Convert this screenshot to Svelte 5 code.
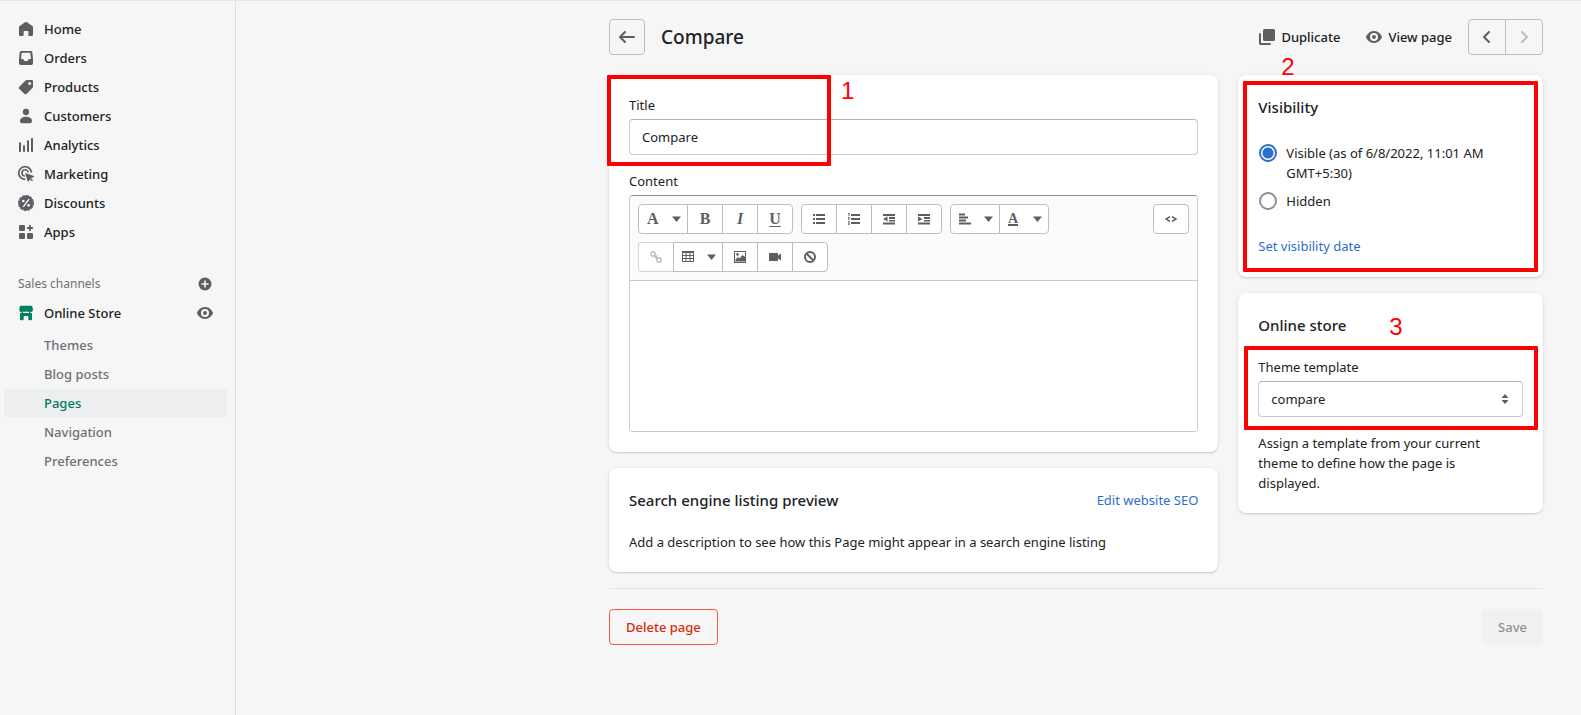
<script>
  const nav = ['Home', 'Orders', 'Products', 'Customers', 'Analytics', 'Marketing', 'Discounts', 'Apps'];
  const channelPages = ['Themes', 'Blog posts', 'Pages', 'Navigation', 'Preferences'];
  let title = $state('Compare');
  let visibility = $state('visible');
  let template = $state('compare');
  let content = $state('');
</script>

{#snippet eye()}
  <svg class="i20" viewBox="0 0 20 20" aria-hidden="true"><path fill-rule="evenodd" d="M17.928 9.628C17.837 9.399 15.611 4 10 4S2.162 9.399 2.07 9.628a1.017 1.017 0 0 0 0 .744C2.163 10.601 4.389 16 10 16s7.837-5.399 7.928-5.628a1.017 1.017 0 0 0 0-.744zM10 14a4 4 0 1 1 0-8 4 4 0 0 1 0 8zm0-6a2 2 0 1 0 0 4 2 2 0 0 0 0-4z" /></svg>
{/snippet}

{#snippet caret()}
  <svg class="caret" viewBox="0 0 9 6" aria-hidden="true"><path d="M0 .5h9L4.500 6z" /></svg>
{/snippet}

{#snippet navIcon(name)}
  <svg class="i16" viewBox="0 0 48 48" aria-hidden="true">
    {#if name === 'Home'}
      <path d="M21 4a5 5 0 0 1 6 0l16 11a4 4 0 0 1 2 3v23a4 4 0 0 1-4 4h-7a3 3 0 0 1-3-3V32a2 2 0 0 0-2-2H19a2 2 0 0 0-2 2v10a3 3 0 0 1-3 3H7a4 4 0 0 1-4-4V18a4 4 0 0 1 2-3z" />
    {:else if name === 'Orders'}
      <path fill-rule="evenodd" d="M10 3h28a5 5 0 0 1 5 4l2 20v13a5 5 0 0 1-5 5H8a5 5 0 0 1-5-5V27L5 7a5 5 0 0 1 5-4zM13 8a2 2 0 0 0-2 2L9 27h6c2 0 3 6 5 6h8c2 0 3-6 5-6h6l-2-17a2 2 0 0 0-2-2z" />
    {:else if name === 'Products'}
      <path fill-rule="evenodd" d="M27 3h14a4 4 0 0 1 4 4v15a6 6 0 0 1-2 5L26 44a5 5 0 0 1-7 0L4 30a5 5 0 0 1 0-7L22 5a7 7 0 0 1 5-2zm8 6a4.500 4.500 0 1 0 .01 0z" />
    {:else if name === 'Customers'}
      <circle cx="24" cy="12" r="9.500" /><path d="M24 26c11 0 18 5 18 12 0 5-3 8-7 8H13c-4 0-7-3-7-8 0-7 7-12 18-12z" />
    {:else if name === 'Analytics'}
      <rect x="3" y="16" width="6" height="29" rx="2" /><rect x="15" y="25" width="6" height="20" rx="2" /><rect x="27" y="10" width="6" height="35" rx="2" /><rect x="39" y="3" width="6" height="42" rx="2" />
    {:else if name === 'Marketing'}
      <g fill="none" stroke="currentColor" stroke-width="5" stroke-linecap="round"><path d="M40 18A19 19 0 1 0 20 40" /><path d="M30 17a9.500 9.500 0 1 0-11 13" /></g>
      <path d="M24 22l22 7c3 1 3 4 0 5l-6 2-1 1 6 6-3 3-6-6-3 6c-1 2-4 2-4-1l-7-20c-1-2 0-4 2-3z" />
    {:else if name === 'Discounts'}
      <circle cx="24" cy="24" r="21.500" /><circle cx="24" cy="24" r="22" fill="none" stroke="currentColor" stroke-width="4" stroke-dasharray="6 5.500" stroke-linecap="round" />
      <path d="M32 14L17 34" stroke="#f6f6f7" stroke-width="4.500" stroke-linecap="round" /><circle cx="16" cy="18" r="4" fill="#f6f6f7" /><circle cx="32" cy="31" r="4" fill="#f6f6f7" />
    {:else if name === 'Apps'}
      <rect x="3" y="3" width="18" height="18" rx="4" /><rect x="3" y="27" width="18" height="18" rx="4" /><rect x="27" y="27" width="18" height="18" rx="4" />
      <path d="M36 5v14M29 12h14" stroke="currentColor" stroke-width="5.500" stroke-linecap="round" />
    {:else}
      <path d="M8 2h32l2 1 3 10c0 5-2 8-6 8-3 0-4-1-5-3-1 2-3 3-5 3s-4-1-5-3c-1 2-3 3-5 3s-4-1-5-3c-1 2-2 3-5 3-4 0-5-3-5-8L6 3z" />
      <path d="M6 24h36v18a4 4 0 0 1-4 4h-4a3 3 0 0 1-3-3v-8a2 2 0 0 0-2-2H19a2 2 0 0 0-2 2v8a3 3 0 0 1-3 3h-4a4 4 0 0 1-4-4z" />
      <path d="M11 19h4v6h-4zM33 19h4v6h-4z" />
    {/if}
  </svg>
{/snippet}

<div class="app">
  <nav class="sidebar" aria-label="Main">
    <ul>
      {#each nav as item}
        <li><a class="item" href="#{item}">{@render navIcon(item)}<span>{item}</span></a></li>
      {/each}
    </ul>
    <div class="section">
      <span>Sales channels</span>
      <button class="plain" aria-label="Add sales channel">
        <svg class="i20" viewBox="0 0 20 20"><circle cx="10" cy="10" r="6.500" /><path d="M10 6.500v7M6.500 10h7" stroke="#f6f6f7" stroke-width="1.600" /></svg>
      </button>
    </div>
    <div class="channel">
      <a class="item store" href="#store">{@render navIcon('Store')}<span>Online Store</span></a>
      <button class="plain" aria-label="View your online store">{@render eye()}</button>
    </div>
    <ul class="sub">
      {#each channelPages as page}
        <li><a class:active={page === 'Pages'} href="#{page}">{page}</a></li>
      {/each}
    </ul>
  </nav>

  <main>
    <div class="page">
      <header>
        <button class="back" aria-label="Back">
          <svg class="i20" viewBox="0 0 20 20"><path d="M17 9H5.414l3.293-3.293a.999.999 0 1 0-1.414-1.414l-5 5a.999.999 0 0 0 0 1.414l5 5a.997.997 0 0 0 1.414 0 .999.999 0 0 0 0-1.414L5.414 11H17a1 1 0 1 0 0-2z" /></svg>
        </button>
        <h1>Compare</h1>
        <div class="actions">
          <button class="action">
            <svg class="i20" viewBox="0 0 20 20" aria-hidden="true"><rect x="6" y="2" width="12" height="12" rx="1.500" /><path d="M2 7a1 1 0 0 1 2 0v9h9a1 1 0 0 1 0 2H3.500A1.500 1.500 0 0 1 2 16.500z" /></svg>
            Duplicate
          </button>
          <button class="action">{@render eye()}View page</button>
        </div>
        <div class="pager">
          <button aria-label="Previous"><svg class="i20" viewBox="0 0 20 20"><path d="M12 16a.997.997 0 0 1-.707-.293l-5-5a.999.999 0 0 1 0-1.414l5-5a.999.999 0 1 1 1.414 1.414L8.414 10l4.293 4.293A.999.999 0 0 1 12 16z" /></svg></button>
          <button aria-label="Next" disabled><svg class="i20" viewBox="0 0 20 20"><path d="M8 16a.999.999 0 0 1-.707-1.707L11.586 10 7.293 5.707a.999.999 0 1 1 1.414-1.414l5 5a.999.999 0 0 1 0 1.414l-5 5A.997.997 0 0 1 8 16z" /></svg></button>
        </div>
      </header>

      <div class="columns">
        <div class="column">
          <section class="card">
            <label for="title">Title</label>
            <input id="title" class="text" type="text" bind:value={title} />
            <label class="next" for="content">Content</label>
            <div class="editor">
              <div class="toolbar">
                <div class="tools">
                  <div class="group">
                    <button class="wide" aria-label="Formatting"><span class="glyph">A</span>{@render caret()}</button>
                    <button aria-label="Bold"><span class="glyph">B</span></button>
                    <button aria-label="Italic"><span class="glyph italic">I</span></button>
                    <button aria-label="Underline"><span class="glyph underline">U</span></button>
                  </div>
                  <div class="group">
                    <button aria-label="Bulleted list"><svg class="i12" viewBox="0 0 12 12"><path d="M0 1h2v2H0zM3 1h9v2H3zM0 5h2v2H0zM3 5h9v2H3zM0 9h2v2H0zM3 9h9v2H3z" /></svg></button>
                    <button aria-label="Numbered list"><svg class="i12" viewBox="0 0 12 12"><path d="M3 1h9v2H3zM3 5h9v2H3zM3 9h9v2H3zM0 0h1.500v3H.6V1H0zM0 4h1.600v1.600L.8 6.400h.8V7H0V6.200L.8 5H0zM0 8h1.600v4H0v-.8h.8v-.8H0v-.8h.8v-.8H0z" /></svg></button>
                    <button aria-label="Outdent"><svg class="i12" viewBox="0 0 12 12"><path d="M0 1h12v2H0zM6 4h6v2H6zM6 7h6v1.500H6zM0 9.500h12v2H0zM4.500 3.500v5L0 6z" /></svg></button>
                    <button aria-label="Indent"><svg class="i12" viewBox="0 0 12 12"><path d="M0 1h12v2H0zM6 4h6v2H6zM6 7h6v1.500H6zM0 9.500h12v2H0zM0 3.500v5L4.500 6z" /></svg></button>
                  </div>
                  <div class="group">
                    <button class="wide" aria-label="Alignment"><svg class="i12" viewBox="0 0 12 12"><path d="M0 .5h6v2H0zM0 3.500h9v2H0zM0 6.500h7v2H0zM0 9.500h12v2H0z" /></svg>{@render caret()}</button>
                    <button class="wide" aria-label="Color"><span class="glyph color">A</span>{@render caret()}</button>
                  </div>
                  <div class="group">
                    <button aria-label="Link" disabled><svg class="i12" viewBox="0 0 12 12"><g fill="none" stroke="currentColor" stroke-width="1.400"><circle cx="3" cy="3" r="2.200" /><circle cx="9" cy="9" r="2.200" /><path d="M4 4l4 4M7 4.500L5 7" /></g></svg></button>
                    <button class="wide" aria-label="Table"><svg class="i12" viewBox="0 0 12 12"><path fill-rule="evenodd" d="M0 0h12v11H0zM1 2v2h2.500V2zM4.500 2v2h3V2zM8.500 2v2H11V2zM1 5v2h2.500V5zM4.500 5v2h3V5zM8.500 5v2H11V5zM1 8v2h2.500V8zM4.500 8v2h3V8zM8.500 8v2H11V8z" /></svg>{@render caret()}</button>
                    <button aria-label="Image"><svg class="i12" viewBox="0 0 12 12"><path fill-rule="evenodd" d="M0 0h12v12H0zM1 1v10h10V1zM1.500 10.500v-2L4 6l1.500 1.500L8.500 4l2.500 2v4.500zM3.500 2a1.400 1.400 0 1 1-.01 0z" /></svg></button>
                    <button aria-label="Video"><svg class="i12" viewBox="0 0 12 12"><path d="M0 2h9v2.500L12 2.500v7L9 7.500V10H0z" /></svg></button>
                    <button aria-label="Clear formatting"><svg class="i12" viewBox="0 0 12 12"><g fill="none" stroke="currentColor" stroke-width="1.900"><circle cx="6" cy="6" r="5" /><path d="M2.500 2.500l7 7" /></g></svg></button>
                  </div>
                </div>
                <div class="group">
                  <button aria-label="Show HTML"><svg class="code" viewBox="0 0 12 6"><path d="M5 .6L1 3l4 2.400M7 .6L11 3 7 5.400" fill="none" stroke="currentColor" stroke-width="1.500" /></svg></button>
                </div>
              </div>
              <textarea id="content" bind:value={content}></textarea>
            </div>
            <div class="mark mark-title"></div>
            <span class="num num-1">1</span>
          </section>

          <section class="card">
            <div class="seo">
              <h2>Search engine listing preview</h2>
              <a href="#seo">Edit website SEO</a>
            </div>
            <p>Add a description to see how this Page might appear in a search engine listing</p>
          </section>
        </div>

        <div class="column">
          <section class="card">
            <h2>Visibility</h2>
            <div class="choices">
              <label class="choice"><input type="radio" name="visibility" value="visible" bind:group={visibility} /><span>Visible (as of 6/8/2022, 11:01 AM GMT+5:30)</span></label>
              <label class="choice"><input type="radio" name="visibility" value="hidden" bind:group={visibility} /><span>Hidden</span></label>
            </div>
            <a class="date" href="#date">Set visibility date</a>
            <div class="mark mark-visibility"></div>
            <span class="num num-2">2</span>
          </section>

          <section class="card">
            <h2>Online store</h2>
            <div class="field">
              <label for="template">Theme template</label>
              <div class="select">
                <select id="template" class="text" bind:value={template}>
                  <option value="compare">compare</option>
                </select>
                <svg viewBox="0 0 8 12" aria-hidden="true"><path d="M4 1l3.500 4h-7zM4 11L.5 7h7z" /></svg>
              </div>
              <div class="mark mark-template"></div>
            </div>
            <p class="help">Assign a template from your current theme to define how the page is displayed.</p>
            <span class="num num-3">3</span>
          </section>
        </div>
      </div>

      <footer>
        <button class="delete">Delete page</button>
        <button class="save" disabled>Save</button>
      </footer>
    </div>
  </main>
</div>

<style>
  :global(body) {
    background: #f6f6f7;
  }
  .app {
    --ink: #202223;
    --icon: #5c5f62;
    --line: #c9cccf;
    display: flex;
    min-height: 100vh;
    box-sizing: border-box;
    border-top: 1px solid #e4e5e7;
    background: #f6f6f7;
    color: var(--ink);
    font: 13px/20px 'Noto Sans', 'Open Sans', sans-serif;
  }
  .app :global(*) {
    box-sizing: border-box;
  }
  button,
  input,
  select,
  textarea {
    font: inherit;
    color: inherit;
    margin: 0;
  }
  button {
    display: flex;
    align-items: center;
    justify-content: center;
    padding: 0;
    border: 0;
    background: none;
    cursor: pointer;
  }
  svg {
    display: block;
    flex: none;
    fill: currentColor;
  }
  .i20 {
    width: 20px;
    height: 20px;
  }
  .i16 {
    width: 16px;
    height: 16px;
  }
  .i12 {
    width: 12px;
    height: 12px;
  }
  ul {
    list-style: none;
    margin: 0;
    padding: 0;
  }
  a {
    color: #2c6ecb;
    text-decoration: none;
  }
  h1,
  h2,
  p {
    margin: 0;
  }

  .sidebar {
    flex: none;
    width: 236px;
    padding: 13px 8px 0 4px;
    border-right: 1px solid #dcdee0;
    font-weight: 500;
  }
  .item {
    display: flex;
    align-items: center;
    gap: 10px;
    height: 29px;
    padding-left: 14px;
    color: var(--ink);
  }
  .item svg,
  .plain {
    color: var(--icon);
  }
  .section,
  .channel {
    display: flex;
    align-items: center;
    justify-content: space-between;
    padding-right: 12px;
  }
  .section {
    height: 28px;
    margin-top: 24px;
    padding-left: 14px;
    color: #6d7175;
    font-size: 12px;
    font-weight: 400;
  }
  .store svg {
    color: #008060;
  }
  .sub {
    margin-top: 4px;
  }
  .sub a {
    display: block;
    height: 28px;
    margin-bottom: 1px;
    padding-left: 40px;
    border-radius: 4px;
    color: #6d7175;
    line-height: 28px;
  }
  .sub .active {
    background: #edeeef;
    color: #007a5c;
  }

  main {
    flex: 1;
    min-width: 0;
    padding: 18px 38px 0;
  }
  .page {
    max-width: 934px;
    margin-left: auto;
  }
  header {
    display: flex;
    align-items: center;
    margin-bottom: 20px;
  }
  .back,
  .pager button {
    width: 36px;
    height: 36px;
    border: 1px solid #babfc3;
    border-radius: 4px;
    color: var(--icon);
  }
  h1 {
    margin-left: 16px;
    font-size: 19px;
    font-weight: 500;
    line-height: 28px;
  }
  .actions {
    display: flex;
    gap: 24px;
    margin: 0 16px 0 auto;
  }
  .action {
    gap: 4px;
    font-weight: 500;
  }
  .action :global(svg) {
    color: var(--icon);
  }
  .pager {
    display: flex;
  }
  .pager button {
    width: 38px;
    border-radius: 4px 0 0 4px;
  }
  .pager button + button {
    margin-left: -1px;
    border-radius: 0 4px 4px 0;
    color: #babec3;
  }

  .columns {
    display: grid;
    grid-template-columns: minmax(0, 2fr) minmax(0, 1fr);
    gap: 20px;
    align-items: start;
  }
  .column {
    display: grid;
    gap: 16px;
  }
  .card {
    position: relative;
    padding: 20px;
    border-radius: 8px;
    background: #fff;
    box-shadow: 0 0 5px rgba(23, 24, 24, 0.05), 0 1px 2px rgba(0, 0, 0, 0.15);
  }
  h2 {
    font-size: 15px;
    font-weight: 500;
    line-height: 24px;
  }
  label {
    display: block;
  }
  .text {
    display: block;
    width: 100%;
    height: 36px;
    margin-top: 4px;
    padding: 0 12px;
    border: 1px solid var(--line);
    border-top-color: #aeb4b9;
    border-radius: 4px;
    background: #fff;
  }
  .next {
    margin-top: 16px;
  }
  .editor {
    margin-top: 4px;
    border: 1px solid var(--line);
    border-top-color: #898f94;
    border-radius: 4px;
    overflow: hidden;
  }
  .toolbar {
    display: flex;
    align-items: flex-start;
    justify-content: space-between;
    padding: 8px;
    border-bottom: 1px solid var(--line);
    background: #fafbfb;
  }
  .tools {
    display: flex;
    flex-wrap: wrap;
    gap: 8px;
    max-width: 440px;
  }
  .group {
    display: flex;
  }
  .group button {
    width: 36px;
    height: 30px;
    border: 1px solid #babfc3;
    background: #fff;
    color: var(--icon);
  }
  .group button + button {
    margin-left: -1px;
  }
  .group button:first-child {
    border-top-left-radius: 4px;
    border-bottom-left-radius: 4px;
  }
  .group button:last-child {
    border-top-right-radius: 4px;
    border-bottom-right-radius: 4px;
  }
  .group .wide {
    width: 50px;
    justify-content: space-between;
    padding: 0 6px 0 8px;
  }
  .group button:disabled {
    border-color: #d2d5d8;
    border-right-color: #babfc3;
    color: #babec3;
  }
  .caret {
    width: 9px;
    height: 6px;
  }
  .code {
    width: 12px;
    height: 6px;
  }
  .glyph {
    font: bold 16px/18px 'Liberation Serif', serif;
  }
  .italic {
    font-style: italic;
  }
  .underline {
    text-decoration: underline;
    text-underline-offset: 2px;
  }
  .color {
    border-bottom: 2px solid currentColor;
    font-size: 14px;
    line-height: 11px;
  }
  textarea {
    display: block;
    width: 100%;
    height: 150px;
    padding: 8px 12px;
    border: 0;
    resize: none;
    outline: 0;
  }
  .seo {
    display: flex;
    align-items: center;
    justify-content: space-between;
  }
  .card p {
    margin-top: 20px;
  }
  .choices {
    display: grid;
    gap: 8px;
    margin-top: 24px;
  }
  .choice {
    display: flex;
    gap: 9px;
  }
  .choice input {
    appearance: none;
    flex: none;
    width: 18px;
    height: 18px;
    margin: 1px 0 1px 1px;
    border: 2px solid #8c9196;
    border-radius: 50%;
  }
  .choice input:checked {
    border-color: #2c6ecb;
    background: radial-gradient(circle, #2c6ecb 5px, #fff 6px);
  }
  .date {
    display: block;
    margin-top: 25px;
    padding-bottom: 1px;
  }
  .field {
    position: relative;
    margin-top: 20px;
  }
  .card .help {
    margin-top: 16px;
    padding-right: 24px;
  }
  .select {
    position: relative;
  }
  .select select {
    appearance: none;
  }
  .select svg {
    position: absolute;
    top: 12px;
    right: 14px;
    width: 8px;
    height: 12px;
    color: var(--icon);
    pointer-events: none;
  }

  footer {
    display: flex;
    justify-content: space-between;
    margin-top: 16px;
    padding-top: 20px;
    border-top: 1px solid #e1e3e5;
  }
  footer button {
    height: 36px;
    padding: 0 16px;
    border-radius: 4px;
    font-weight: 500;
  }
  .delete {
    border: 1px solid #fd5749;
    color: #d72c0d;
  }
  .save {
    background: #f1f1f1;
    color: #8c9196;
  }

  .mark {
    position: absolute;
    border: 4px solid #f00;
    border-radius: 1px;
    pointer-events: none;
  }
  .mark-title {
    top: 0;
    left: -2px;
    width: 224px;
    height: 91px;
  }
  .mark-visibility {
    inset: 6px 5px 5px 5px;
  }
  .mark-template {
    inset: -11px -15px -13px -14px;
  }
  .num {
    position: absolute;
    color: #f00;
    font: 24px/24px 'Liberation Sans', Arial, sans-serif;
  }
  .num-1 {
    top: 4px;
    left: 232px;
  }
  .num-2 {
    top: -20px;
    left: 43px;
  }
  .num-3 {
    top: 22px;
    left: 151px;
  }
</style>
